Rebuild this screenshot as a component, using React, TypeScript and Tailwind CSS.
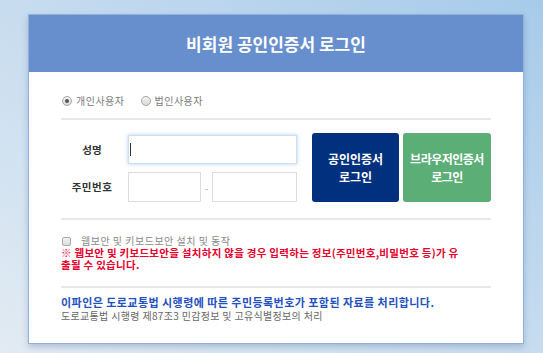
import React from "react";

function Radio({ checked, label }: { checked?: boolean; label: string }) {
  return (
    <label className="flex items-center gap-[4px]">
      <span className="flex h-[10px] w-[10px] items-center justify-center rounded-full border border-[#a5a5a5] bg-linear-to-b from-[#f4f4f4] to-[#d9d9d9]">
        {checked && <span className="h-[4px] w-[4px] rounded-full bg-[#555]" />}
      </span>
      <span className="text-[10px] leading-[14px] tracking-[0.5px] text-[#7a7a7a]">{label}</span>
    </label>
  );
}

function Input({ className = "", focused = false }: { className?: string; focused?: boolean }) {
  return (
    <div
      className={`flex items-center border bg-white ${
        focused ? "border-[#cfdff0] shadow-[0_0_4px_rgba(110,170,230,0.55)]" : "border-[#dcdcdc]"
      } ${className}`}
    >
      {focused && <span className="ml-px h-[13px] w-px bg-[#333]" />}
    </div>
  );
}

export default function App() {
  return (
    <div
      className="min-h-screen w-full bg-linear-to-bl from-[#a6cbea] via-[#c7dcef] to-[#e2ebf3] pl-[28px] pt-[14px]"
      style={{ fontFamily: '"Noto Sans CJK KR", "Noto Sans", sans-serif' }}
    >
      <div className="w-[496px] border border-[#90b1de] bg-white shadow-[0_3px_6px_rgba(70,100,140,0.3)]">
        <div className="flex h-[57px] items-center justify-center bg-[#678fcd] text-[17px] font-bold text-white">
          비회원 공인인증서 로그인
        </div>

        <div className="px-[32px] pb-[21px] pt-[22px]">
          <div className="flex h-[14px] items-center gap-[16px] pl-px">
            <Radio checked label="개인사용자" />
            <Radio label="법인사용자" />
          </div>

          <div className="mt-[10px] h-[2px] bg-[#e8e8e8]" />

          <div className="mt-[13px] flex h-[69px]">
            <div className="flex flex-col pt-[2px]">
              <div className="flex h-[29px] items-center">
                <span className="w-[62px] text-center text-[10.5px] font-bold text-[#333]">성명</span>
                <Input focused className="ml-[5px] h-[29px] w-[169px]" />
              </div>
              <div className="mt-[8px] flex h-[30px] items-center">
                <span className="w-[62px] text-center text-[10.5px] font-bold tracking-[0.5px] text-[#333]">
                  주민번호
                </span>
                <div className="ml-[5px] flex w-[169px] items-center">
                  <Input className="h-[30px] w-[73px]" />
                  <span className="flex-1 text-center text-[10px] text-[#aaa]">-</span>
                  <Input className="h-[30px] w-[85px]" />
                </div>
              </div>
            </div>

            <button className="ml-[15px] flex h-[69px] w-[87px] flex-col items-center justify-center rounded-[3px] bg-[#00307e] text-[12px] font-bold leading-[18px] text-white">
              <span>공인인증서</span>
              <span>로그인</span>
            </button>
            <button className="ml-[4px] flex h-[69px] w-[88px] flex-col items-center justify-center rounded-[3px] bg-[#5bae75] text-[12px] font-bold leading-[18px] tracking-[-0.5px] text-white">
              <span>브라우저인증서</span>
              <span>로그인</span>
            </button>
          </div>

          <div className="mt-[16px] h-[2px] bg-[#e8e8e8]" />

          <div className="mt-[15px] flex h-[12px] items-center gap-[10px] pl-px">
            <span className="h-[9px] w-[9px] rounded-[2px] border border-[#aaa] bg-linear-to-b from-[#f2f2f2] to-[#dcdcdc]" />
            <span className="text-[10px] leading-[12px] tracking-[0.5px] text-[#888]">
              웹보안 및 키보드보안 설치 및 동작
            </span>
          </div>
          <p className="text-[10.5px] font-bold leading-[12px] tracking-[0.28px] text-[#e6002c]">
            <span className="block whitespace-nowrap">
              ※ 웹보안 및 키보드보안을 설치하지 않을 경우 입력하는 정보(주민번호,비밀번호 등)가 유
            </span>
            <span className="block whitespace-nowrap">출될 수 있습니다.</span>
          </p>

          <div className="mt-[15px] h-[2px] bg-[#e8e8e8]" />

          <p className="mt-[8px] whitespace-nowrap text-[11px] font-bold leading-[13px] tracking-[0.45px] text-[#2350bf]">
            이파인은 도로교통법 시행령에 따른 주민등록번호가 포함된 자료를 처리합니다.
          </p>
          <p className="whitespace-nowrap text-[10px] leading-[13px] tracking-[0.33px] text-[#666]">
            도로교통법 시행령 제87조3 민감정보 및 고유식별정보의 처리
          </p>
        </div>
      </div>
    </div>
  );
}
